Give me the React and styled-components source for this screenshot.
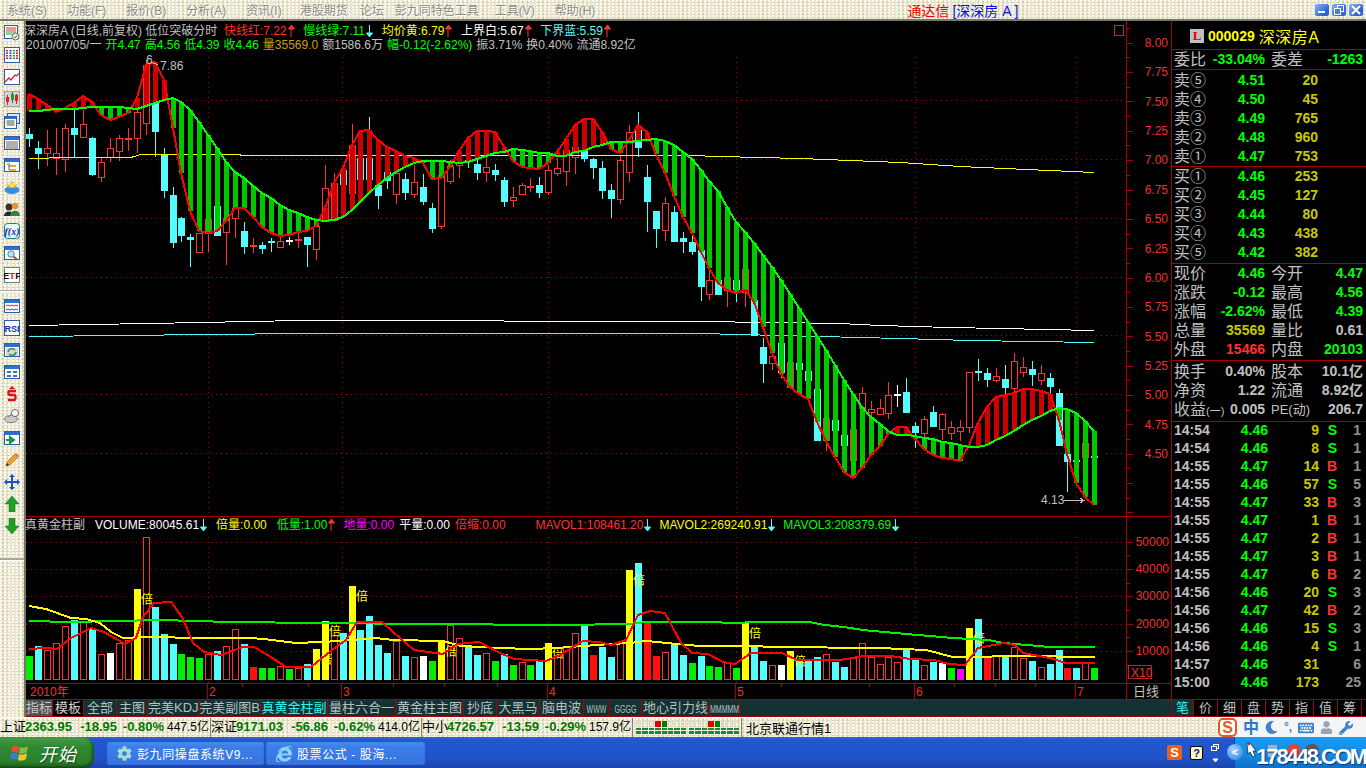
import React from 'react';
import styled, { createGlobalStyle, css } from 'styled-components';
import { FaMoon, FaKeyboard, FaUser, FaWrench, FaInternetExplorer, FaCog } from 'react-icons/fa';

const SANS = `"Liberation Sans", "Noto Sans CJK SC", sans-serif`;

const GlobalStyle = createGlobalStyle`
  html, body { margin: 0; padding: 0; background: #000; }
  body { font-family: ${SANS}; font-size: 12px; }
`;

// speckled beige of the old skinned toolbars
const speckle = css`
  background-color: #e9e5d0;
  background-image:
    radial-gradient(circle at 1px 1px, #fbfaf0 0.8px, transparent 1.1px),
    radial-gradient(circle at 3px 2px, #d6d0a8 0.7px, transparent 1px);
  background-size: 4px 3px, 5px 4px;
`;

const Shell = styled.div`
  width: 1366px;
  height: 768px;
  overflow: hidden;
  display: flex;
  flex-direction: column;
  background: #000;
`;

/* ---------- menu bar ---------- */

const MenuBar = styled.div`
  ${speckle}
  height: 21px;
  box-sizing: border-box;
  border-bottom: 2px solid #77756a;
  display: flex;
  align-items: center;
  padding: 0 3px 0 7px;
  flex: none;
`;

const MenuItem = styled.span`
  margin-right: 20px;
  margin-left: ${p => p.$ml || 0}px;
  color: #8d8d84;
  text-shadow: 1px 1px 0 #fff;
  font-size: 12px;
  white-space: nowrap;
`;

const AppTitle = styled.div`
  margin-left: 292px;
  font-size: 14px;
  color: #f00000;
  white-space: pre;
  span { color: #1010e0; margin-left: 3px; }
`;

const WinButtons = styled.div`
  margin-left: auto;
  display: flex;
  gap: 3px;
`;

const WinButton = styled.div`
  width: 14px;
  height: 12px;
  border-radius: 2px;
  background: linear-gradient(135deg, #8db4f0, #2e66d8 70%);
  display: flex;
  align-items: center;
  justify-content: center;
  svg { display: block; }
`;

/* ---------- left toolbar ---------- */

const Body = styled.div`
  height: 696px;
  display: flex;
  flex: none;
`;

const Toolbar = styled.div`
  ${speckle}
  width: 26px;
  box-sizing: border-box;
  border-right: 2px solid #77756a;
  padding-top: 1px;
  display: flex;
  flex-direction: column;
  flex: none;
`;

const ToolCell = styled.div`
  height: 22px;
  flex: none;
  display: flex;
  align-items: center;
  justify-content: center;
`;

const ToolSep = styled.div`
  height: 9px;
  flex: none;
  display: flex;
  align-items: center;
  &::after { content: ''; flex: 1; height: 1px; background: #a8a698; border-bottom: 1px solid #fff; }
`;

const ToolRule = styled.div`
  height: 2px;
  margin-top: 21px;
  background: #a8a698;
  border-bottom: 1px solid #fff;
  flex: none;
`;

const IconSvg = styled.svg`
  width: 16px;
  height: 16px;
  display: block;
`;

const Win = ({ children }) => (
  <>
    <rect x="0.5" y="1.5" width="15" height="13" fill="#fff" stroke="#2a5fb0" />
    <rect x="1" y="2" width="14" height="3" fill="#2f6fd0" />
    {children}
  </>
);

const icons = [
  <>
    <rect x="0.5" y="0.5" width="13" height="13" fill="#fff" stroke="#2a5fb0" />
    <path d="M2 3h10M2 5h10" stroke="#d03030" /><path d="M2 7h10M2 9h6" stroke="#20a040" />
    <circle cx="11.5" cy="11.5" r="3.5" fill="#e8e8e8" stroke="#666" /><path d="M10 11.5l1.2 1.4 2-2.6" stroke="#208030" fill="none" />
  </>,
  <>
    <rect x="0.5" y="0.5" width="15" height="15" fill="#fff" stroke="#2a5fb0" />
    <path d="M3 3v10" stroke="#d02020" strokeWidth="2" strokeDasharray="1.5 1" /><path d="M6.5 3v10" stroke="#1030d0" strokeWidth="2" strokeDasharray="1.5 1" />
    <path d="M10 3v10" stroke="#20a020" strokeWidth="2" strokeDasharray="1.5 1" /><path d="M13 3v10" stroke="#d02020" strokeWidth="2" strokeDasharray="1.5 1" />
  </>,
  <>
    <rect x="0.5" y="0.5" width="15" height="15" fill="#fff" stroke="#2a5fb0" />
    <path d="M1 13l4-4 2 2 4-5 2 1 2-3" stroke="#e02020" strokeWidth="1.3" fill="none" />
  </>,
  <>
    <rect x="0.5" y="0.5" width="15" height="15" fill="#d4d4d4" stroke="#a0a0a0" />
    <path d="M3.5 4v10" stroke="#d02020" /><rect x="2" y="6" width="3" height="5" fill="#e02020" />
    <path d="M8.5 1v11" stroke="#108030" /><rect x="7" y="3" width="3" height="6" fill="#18a040" />
    <path d="M12.5 3v10" stroke="#d02020" /><rect x="11" y="4" width="3" height="6" fill="#e02020" />
  </>,
  <>
    <rect x="3.5" y="0.5" width="12" height="10" fill="#dce8f8" stroke="#2a5fb0" />
    <rect x="0.5" y="3.5" width="12" height="12" fill="#fff" stroke="#2a5fb0" /><rect x="1" y="4" width="11" height="2" fill="#2f6fd0" />
    <path d="M2.5 8h8M2.5 10h8M2.5 12h8" stroke="#505050" />
  </>,
  <Win><path d="M2 7h12M2 9h12M2 11h12M2 13h12" stroke="#606060" /></Win>,
  <Win>
    <rect x="3" y="6" width="3" height="2" fill="#e0b020" /><rect x="8" y="8" width="4" height="2" fill="#e0b020" /><rect x="8" y="12" width="4" height="2" fill="#e0b020" />
    <path d="M5 8v5h3M5 9h3" stroke="#606060" fill="none" />
  </Win>,
  <>
    <ellipse cx="8" cy="11" rx="7.5" ry="4" fill="#3a8ee0" />
    <path d="M2 5l3 4h6l3-4-3 1-3-4-3 4z" fill="#f0a828" /><ellipse cx="8" cy="6" rx="3" ry="2" fill="#ffd860" />
  </>,
  <>
    <circle cx="5" cy="6" r="3.5" fill="#403020" /><path d="M0 15c0-6 10-6 10 0z" fill="#1c2440" />
    <circle cx="11" cy="5" r="3.2" fill="#e89040" /><path d="M6 15c0-7 10-7 10 0z" fill="#408030" />
  </>,
  <>
    <rect x="0.5" y="0.5" width="15" height="15" rx="3" fill="#eaf6f0" stroke="#108080" />
    <text x="8" y="12" textAnchor="middle" fontSize="10" fontStyle="italic" fontWeight="700" fill="#1030b0" fontFamily="Liberation Serif">f(x)</text>
  </>,
  <Win><circle cx="7" cy="9" r="3.2" fill="#bfe0ff" stroke="#5080a0" /><path d="M9.5 11.5l3.5 3" stroke="#806030" strokeWidth="2" /></Win>,
  <>
    <rect x="0.5" y="0.5" width="15" height="15" fill="#fff" stroke="#6a7c98" />
    <text x="8" y="12" textAnchor="middle" fontSize="9.5" fontWeight="700" fill="#101010" fontFamily="Liberation Sans">E<tspan fill="#e02020">T</tspan>F</text>
  </>,
  <Win><path d="M2 8l2-1 2 1 2-1 2 1 2-1 2 1" stroke="#e02020" fill="none" /><path d="M2 12l2-1 2 1 2-1 2 1 2-1 2 1" stroke="#2040d0" fill="none" /></Win>,
  <>
    <rect x="0.5" y="0.5" width="15" height="15" fill="#fff" stroke="#2a5fb0" />
    <text x="8" y="12" textAnchor="middle" fontSize="9" fontWeight="700" fill="#1030c0" fontFamily="Liberation Sans">RSI</text>
  </>,
  <Win><rect x="2" y="6" width="12" height="8" fill="#d8d8d8" /><path d="M4 10a4 4 0 0 1 7-2M12 10a4 4 0 0 1-7 2" stroke="#30a040" strokeWidth="1.8" fill="none" /></Win>,
  <Win><rect x="3" y="7" width="4" height="2" fill="#4070c0" /><rect x="9" y="7" width="4" height="2" fill="#4070c0" /><rect x="3" y="11" width="4" height="2" fill="#4070c0" /><rect x="9" y="11" width="4" height="2" fill="#4070c0" /></Win>,
  <>
    <path d="M8 0l3 3H5z" fill="#e01010" />
    <path d="M12 5H6C4 5 4 9 6 9h4c2 0 2 5 0 5H4" stroke="#e01010" strokeWidth="2.4" fill="none" />
  </>,
  <>
    <ellipse cx="7" cy="11" rx="6.5" ry="3.6" fill="#c8c8c8" stroke="#808080" />
    <circle cx="11" cy="5" r="3.6" fill="#eef4fa" stroke="#707070" /><path d="M4 9l4-3" stroke="#909090" strokeWidth="1.5" />
  </>,
  <Win><path d="M2 10h6M6 7l4 3-4 3z" stroke="#10a030" strokeWidth="2" fill="#10a030" /></Win>,
  <>
    <path d="M2 14l1-4 8-8 3 3-8 8z" fill="#f0a030" stroke="#a06010" strokeWidth="0.6" />
    <path d="M11 2l3 3 1-1-3-3z" fill="#e06060" /><path d="M2 14l1-3 2 2z" fill="#303030" />
  </>,
  <path d="M8 0l3 3H9v4h4V5l3 3-3 3V9H9v4h2l-3 3-3-3h2V9H3v2L0 8l3-3v2h4V3H5z" fill="#1850c8" />,
  <path d="M8 0l7 8h-4v8H5V8H1z" fill="#20a020" stroke="#107010" strokeWidth="0.5" />,
  <path d="M8 16l7-8h-4V0H5v8H1z" fill="#20a020" stroke="#107010" strokeWidth="0.5" />,
];

/* ---------- chart data, all in screen pixels ---------- */

const candleX = i => Math.round(29.3 + 8.95 * i);

// type, wick top, body top, body bottom, wick bottom
const candles = [
  ['c',128,134,139,147],['c',141,148,154,169],['r',130,148,153,166],['r',128,153,158,175],['r',124,128,159,172],
  ['c',108,128,135,157],['r',110,124,137,138],['c',137,138,175,176],['r',157,162,177,182],['r',138,148,157,162],
  ['r',135,138,151,161],['d',128,138,140,151],['r',98,112,138,153],['r',60,65,123,135],['c',88,103,132,157],
  ['c',148,154,191,198],['c',187,195,243,248],['c',217,218,236,242],['c',234,237,240,267],['r',233,233,252,252],
  ['r',219,219,233,252],['c',206,206,236,236],['r',218,218,232,265],['r',207,208,218,238],['c',222,231,247,254],
  ['d',238,245,247,253],['c',242,245,249,254],['c',238,241,243,252],['r',235,241,247,247],['w',237,240,241,245],
  ['d',233,239,241,248],['c',237,237,245,267],['r',226,226,249,260],['r',165,188,220,220],['r',173,183,220,220],
  ['c',165,170,185,205],['r',124,145,193,210],['c',150,158,180,185],['c',117,158,180,180],['c',185,185,196,209],
  ['c',172,172,181,189],['r',172,173,194,204],['c',173,179,193,200],['r',165,182,194,198],['c',174,187,202,205],
  ['c',203,208,229,233],['r',173,175,226,229],['r',160,166,181,184],['r',152,163,165,178],['c',159,160,162,168],
  ['c',160,164,173,180],['r',157,167,172,182],['c',164,170,175,181],['c',177,180,202,207],['r',187,197,200,207],
  ['r',183,185,194,195],['d',178,186,188,192],['c',177,185,193,198],['r',165,170,192,195],['r',158,168,173,176],
  ['r',150,150,171,186],['r',147,147,157,174],['c',151,151,159,162],['c',158,159,168,179],['c',161,168,191,199],
  ['c',184,190,199,218],['r',156,160,199,204],['r',125,132,172,182],['c',112,130,148,157],['c',165,177,202,232],
  ['c',211,211,229,248],['r',197,203,230,241],['c',206,212,242,242],['c',232,238,242,253],['c',235,242,252,255],
  ['c',250,250,287,301],['r',268,280,294,300],['c',280,280,295,295],['r',277,277,290,307],['c',280,280,290,302],
  ['r',268,269,292,307],['c',280,300,336,336],['c',338,347,364,383],['r',352,356,363,370],['c',343,343,373,378],
  ['r',362,362,387,387],['c',363,363,370,390],['c',371,371,381,398],['c',389,389,441,441],['r',418,418,440,451],
  ['c',420,420,431,457],['c',435,435,446,446],['r',429,429,460,460],['r',387,393,408,413],['r',401,409,412,417],
  ['r',399,408,414,415],['r',382,395,413,419],['w',385,394,395,407],['c',378,392,413,413],['c',422,426,433,448],
  ['r',416,419,433,440],['c',406,412,427,427],['r',413,414,429,440],['r',421,427,433,440],['r',420,427,431,441],
  ['r',372,372,427,433],['c',359,371,373,381],['c',368,373,380,387],['r',368,376,380,382],['c',365,379,388,395],
  ['r',353,361,388,392],['r',357,367,372,377],['c',361,369,375,386],['r',365,373,380,385],['c',373,378,387,397],
  ['c',389,393,446,446],['c',454,454,462,492],['c',459,460,462,463],['r',443,443,457,457],['c',455,456,458,459],
];

const fast = [94,99,105,112,108,103,96,102,115,120,117,113,98,65,62,80,128,173,211,231,233,231,221,208,208,217,227,233,236,235,232,231,226,208,183,168,145,131,130,140,147,151,156,158,163,179,178,167,151,138,131,131,132,147,161,167,168,169,163,152,139,125,119,119,132,149,153,140,125,132,154,173,196,217,233,252,268,283,290,293,290,302,327,353,374,387,394,399,422,441,457,472,478,468,455,446,434,427,427,439,449,455,458,459,461,445,423,407,397,395,393,389,389,391,394,420,454,483,497,505];
const slow = [111,111,110,109,109,109,108,107,107,107,107,108,109,106,103,100,98,102,110,122,135,148,162,172,178,186,193,198,205,210,213,217,220,221,220,217,210,202,193,185,178,172,167,163,161,161,161,162,163,162,159,156,153,152,149,150,151,153,153,156,156,152,151,147,145,142,142,142,141,140,139,141,145,152,159,170,181,191,207,222,232,243,255,267,280,294,308,322,336,350,365,380,394,407,417,424,431,435,435,436,438,439,442,443,445,447,447,445,440,436,431,425,420,416,411,408,409,413,421,431];

// half-pixel heights keep the 1px lines from vanishing under crispEdges
const yellowLine = [[29,158.5],[70,157.5],[130,157.5],[135,156.5],[140,154.5],[340,155.5],[690,155.5],[720,156.5],[800,158.5],[900,162.5],[960,166.5],[1094,172.5]];
const whiteLine = [[29,325.5],[150,323.5],[300,320.5],[700,321.5],[840,323.5],[880,325.5],[950,327.5],[1000,328.5],[1094,330.5]];
const cyanLine = [[29,336.5],[300,333.5],[700,333.5],[820,336.5],[900,338.5],[970,340.5],[1094,342.5]];

const volumes = [
  ['g',656],['c',646],['r',650],['r',643],['r',626],['c',620],['r',622],['c',628],['r',654],['w',653],
  ['r',643],['r',640],['y',589],['r',537],['c',607],['c',634],['c',644],['g',654],['g',657],['g',658],
  ['r',654],['c',651],['r',646],['r',629],['c',644],['R',667],['g',668],['g',668],['r',666],['g',669],
  ['r',668],['c',664],['y',649],['y',621],['r',635],['c',633],['y',586],['c',630],['c',616],['c',645],
  ['c',653],['r',641],['c',656],['r',657],['w',656],['g',661],['y',641],['r',625],['r',638],['c',645],
  ['c',655],['r',653],['g',661],['c',654],['g',665],['r',662],['g',665],['c',661],['y',643],['r',655],
  ['r',646],['r',633],['c',625],['R',655],['c',647],['c',657],['r',642],['y',570],['c',563],['R',623],
  ['R',656],['r',652],['c',643],['c',655],['g',663],['c',656],['g',666],['g',667],['r',662],['g',668],
  ['y',623],['c',645],['c',661],['r',665],['w',665],['y',651],['c',660],['c',660],['c',657],['r',654],
  ['c',662],['c',667],['r',658],['r',643],['r',657],['r',664],['r',657],['r',662],['c',650],['c',660],
  ['r',665],['c',662],['w',663],['g',668],['m',669],['y',628],['c',619],['R',657],['r',656],['c',657],
  ['r',647],['r',658],['c',661],['r',667],['c',664],['c',650],['R',668],['c',668],['r',662],['g',668],
];

const volRed = [[29,649],[46,648],[57,649],[71,638],[91,628],[104,632],[125,644],[136,638],[143,617],[154,603],[171,602],[182,617],[193,643],[204,652],[221,655],[243,647],[254,647],[271,657],[286,667],[311,667],[332,650],[346,640],[357,622],[382,622],[393,632],[414,650],[443,654],[457,644],[479,642],[500,653],[514,659],[546,661],[560,655],[583,641],[599,642],[611,645],[626,640],[638,615],[650,611],[665,613],[681,643],[692,653],[708,654],[723,662],[735,664],[751,653],[782,653],[797,660],[817,660],[840,660],[864,656],[891,656],[910,659],[934,660],[949,664],[965,665],[978,648],[1004,643],[1015,645],[1023,653],[1050,658],[1066,663],[1095,663]];
const volYellow = [[29,606],[46,609],[71,618],[86,619],[100,623],[111,632],[123,638],[143,637],[171,637],[179,638],[250,638],[264,639],[296,643],[321,642],[339,641],[375,638],[393,640],[443,641],[461,646],[500,648],[530,649],[557,648],[583,646],[611,644],[630,643],[646,641],[657,642],[677,644],[700,646],[751,646],[774,647],[879,648],[926,650],[953,657],[969,657],[1015,656],[1095,657]];
const volGreen = [[29,621],[70,622],[160,620],[230,622],[320,623],[425,624],[560,625],[630,624],[646,622],[700,622],[743,623],[747,622],[809,622],[825,625],[844,627],[863,630],[895,633],[918,635],[953,638],[988,640],[1004,643],[1027,645],[1050,647],[1095,647]];

const COLORS = { c: '#54fcfc', r: '#ff3232', d: '#ff3232', R: '#ff1010', w: '#ffffff', g: '#00ee00', y: '#ffff00', m: '#ff00ff' };
const GRID = '#b00000';
const AXIS = '#a80000';
const VGRID_X = [208.5, 342.5, 548.5, 736.5, 915.5, 1076.5];
const toPath = pts => pts.map(([x, y]) => `${x},${y}`).join(' ');

const ChartSvg = styled.svg`
  display: block;
  flex: none;
  shape-rendering: crispEdges;
  text { font-family: ${SANS}; font-size: 12px; shape-rendering: auto; }
`;

const Workspace = styled.div`
  width: 1145px;
  flex: none;
  display: flex;
  flex-direction: column;
`;

const Pane = styled.div`
  position: relative;
  flex: none;
`;

const Legend = styled.div`
  position: absolute;
  left: 0;
  top: ${p => p.$top}px;
  display: flex;
  flex-direction: column;
`;

const LegendRow = styled.div`
  height: 14px;
  line-height: 14px;
  display: flex;
  align-items: center;
  gap: ${p => p.$gap || 8}px;
  white-space: nowrap;
`;

const LegendItem = styled.span`
  display: inline-flex;
  align-items: center;
  gap: 1px;
  color: ${p => p.$c || '#c0c0c0'};
  margin-left: ${p => p.$ml || 0}px;
`;

const Arrow = ({ up, color }) => (
  <svg width="7" height="14" viewBox="0 0 7 14" style={{ display: 'block' }}>
    {up ? <path d="M3 13V5M0.5 5L3.5 1 6.5 5z" stroke={color} fill={color} /> : <path d="M3.5 1V9M0.5 9L3.5 13 6.5 9z" stroke={color} fill={color} />}
  </svg>
);

const RED_UP = <Arrow up color="#ff3232" />;
const CYAN_DOWN = <Arrow color="#54fcfc" />;

const PriceChart = () => {
  const ticks = [];
  for (let k = -1; k <= 32; k++) ticks.push({ y: Math.round(42.7 + 14.68 * k), major: k % 2 === 0 });
  return (
    <ChartSvg width="1145" height="496" viewBox="26 21 1145 496">
      {[100.5, 159.5, 218.5, 277.5, 335.5, 394.5, 453.5].map(y => (
        <line key={y} x1="26" x2="1126" y1={y} y2={y} stroke={GRID} strokeDasharray="1 4" />
      ))}
      {VGRID_X.map(x => <line key={x} x1={x} x2={x} y1="57" y2="517" stroke={GRID} strokeDasharray="1 4" />)}

      {candles.map(([t, hi, top, bot, lo], i) => {
        const x = candleX(i);
        const col = COLORS[t];
        if (t === 'r') {
          return (
            <g key={i}>
              <rect x={x} y={hi} width="1" height={lo - hi} fill={col} />
              <rect x={x - 2.5} y={top + 0.5} width="6" height={bot - top} fill="#000" stroke={col} />
            </g>
          );
        }
        return (
          <g key={i}>
            <rect x={x} y={hi} width="1" height={lo - hi} fill={col} />
            <rect x={x - 3} y={top} width="7" height={Math.max(bot - top, 2)} fill={col} />
          </g>
        );
      })}

      <polyline points={toPath(yellowLine)} fill="none" stroke="#ffff00" />
      <polyline points={toPath(whiteLine)} fill="none" stroke="#ffffff" />
      <polyline points={toPath(cyanLine)} fill="none" stroke="#54fcfc" />

      {fast.map((f, i) => {
        const s = slow[i];
        return (
          <rect key={i} x={candleX(i) - 2} y={Math.min(f, s)} width="5" height={Math.abs(f - s)} fill={f < s ? '#cc0000' : '#00c800'} />
        );
      })}
      <polyline points={fast.map((y, i) => `${candleX(i)},${y}`).join(' ')} fill="none" stroke="#ff0000" strokeWidth="2" />
      <polyline points={slow.map((y, i) => `${candleX(i)},${y}`).join(' ')} fill="none" stroke="#00ff00" strokeWidth="2" />

      <text x="146" y="64" fill="#c0c0c0">6</text>
      <path d="M151 62l7 3" stroke="#c0c0c0" fill="none" />
      <text x="160" y="70" fill="#c0c0c0">7.86</text>
      <text x="1041" y="504" fill="#c0c0c0">4.13</text>
      <path d="M1064 500.5h19M1080 498l4 2.5-4 2.5" stroke="#c0c0c0" fill="none" />

      <rect x="1114.5" y="25.5" width="9" height="10" fill="none" stroke="#d02020" />
      <line x1="1126.5" x2="1126.5" y1="21" y2="517" stroke={AXIS} />
      {ticks.map(({ y, major }) => (
        <line key={y} x1="1127" x2={major ? 1133 : 1130} y1={y + 0.5} y2={y + 0.5} stroke={AXIS} />
      ))}
      {Array.from({ length: 15 }, (_, k) => (
        <text key={k} x="1168" y={47 + 29.36 * k} textAnchor="end" fill="#f03030">{(8 - 0.25 * k).toFixed(2)}</text>
      ))}
      <line x1="26" x2="1171" y1="516.5" y2="516.5" stroke={AXIS} />
    </ChartSvg>
  );
};

const monthMarks = [[207, '2'], [341, '3'], [547, '4'], [735, '5'], [914, '6'], [1075, '7']];
const dayTicks = [242, 308, 393, 444, 497, 781, 869, 954, 995, 1035];

const VolumeChart = () => (
  <ChartSvg width="1145" height="182" viewBox="26 517 1145 182">
    {[542.5, 569.5, 596.5, 624.5, 651.5].map(y => (
      <line key={y} x1="26" x2="1126" y1={y} y2={y} stroke={GRID} strokeDasharray="1 4" />
    ))}
    {VGRID_X.map(x => <line key={x} x1={x} x2={x} y1="537" y2="683" stroke={GRID} strokeDasharray="1 4" />)}

    {volumes.map(([t, top], i) => {
      const x = candleX(i);
      if (t === 'r') {
        return <rect key={i} x={x - 2.5} y={top + 0.5} width="6" height={679 - top} fill="#000" stroke={COLORS.r} />;
      }
      return <rect key={i} x={x - 3} y={top} width="7" height={680 - top} fill={COLORS[t]} />;
    })}
    {volumes.map(([t, top], i) => t === 'y' && (
      <text key={i} x={candleX(i) + 4} y={top + 15} fill="#ffff00">倍</text>
    ))}

    <polyline points={toPath(volGreen)} fill="none" stroke="#00ee00" strokeWidth="2" />
    <polyline points={toPath(volYellow)} fill="none" stroke="#ffff00" strokeWidth="2" />
    <polyline points={toPath(volRed)} fill="none" stroke="#ff0000" strokeWidth="2" />

    <line x1="1126.5" x2="1126.5" y1="517" y2="699" stroke={AXIS} />
    {[542, 569, 596, 624, 651].map(y => <line key={y} x1="1127" x2="1133" y1={y + 0.5} y2={y + 0.5} stroke={AXIS} />)}
    {[555, 583, 610, 637, 665].map(y => <line key={y} x1="1127" x2="1130" y1={y + 0.5} y2={y + 0.5} stroke={AXIS} />)}
    {[50000, 40000, 30000, 20000, 10000].map((v, k) => (
      <text key={v} x="1169" y={[546, 573, 600, 628, 655][k]} textAnchor="end" fill="#f03030">{v}</text>
    ))}
    <rect x="1128.5" y="665.5" width="23" height="13" fill="none" stroke="#c02020" />
    <text x="1131" y="677" fill="#f03030">X10</text>

    <line x1="26" x2="1171" y1="683.5" y2="683.5" stroke={AXIS} />
    <text x="30" y="696" fill="#f03030">2010年</text>
    {monthMarks.map(([x, m]) => (
      <g key={m}>
        <line x1={x + 0.5} x2={x + 0.5} y1="684" y2="699" stroke={AXIS} />
        <text x={x + 2} y="696" fill="#f03030">{m}</text>
      </g>
    ))}
    {dayTicks.map(x => <line key={x} x1={x + 0.5} x2={x + 0.5} y1="684" y2="687" stroke={AXIS} />)}
    <text x="1133" y="696" fill="#c0c0c0" style={{ fontSize: 13 }}>日线</text>
  </ChartSvg>
);

/* ---------- tab bar under the charts ---------- */

const tabs = [
  ['指标', 27, 'on'], ['模板', 31, 'dark'], ['全部', 33], ['主图', 31], ['完美KDJ', 51], ['完美副图B', 62],
  ['真黄金柱副', 67, 'cyan'], ['量柱六合一', 68], ['黄金柱主图', 68], ['抄底', 33], ['大黑马', 43], ['脑电波', 44],
  ['WWW', 26, 'small'], ['GGGG', 32, 'small'], ['地心引力线', 68], ['MMMMM', 30, 'small'],
];

const TabBar = styled.div`
  height: 18px;
  flex: none;
  display: flex;
  background: #143232;
  box-sizing: border-box;
  border-top: 1px solid ${AXIS};
  border-bottom: 1px solid ${AXIS};
`;

const Tab = styled.div`
  width: ${p => p.$w}px;
  flex: none;
  box-sizing: border-box;
  border-right: 1px solid ${AXIS};
  text-align: center;
  line-height: 16px;
  white-space: nowrap;
  overflow: hidden;
  font-size: 13px;
  color: #b4c0c0;
  ${p => p.$kind === 'on' && 'background: #505050; color: #c8c8c8;'}
  ${p => p.$kind === 'dark' && 'background: #000; color: #d0d0d0;'}
  ${p => p.$kind === 'cyan' && 'color: #30f0f0;'}
`;

// the tiny latin tab names are tall and squeezed in the original
const SqueezedLabel = styled.span`
  display: inline-block;
  font-size: 7px;
  transform: scaleY(1.6);
`;

/* ---------- right quote panel ---------- */

const QuotePanel = styled.div`
  width: 195px;
  flex: none;
  box-sizing: border-box;
  border-left: 1px solid ${AXIS};
  display: flex;
  flex-direction: column;
  background: #000;
  color: #c0c0c0;
`;

const StockHeader = styled.div`
  height: 29px;
  flex: none;
  box-sizing: border-box;
  border-bottom: 1px solid ${AXIS};
  display: flex;
  align-items: center;
  padding: 2px 0 0 18px;
  color: #ffff00;
`;

const MarketBadge = styled.span`
  width: 14px;
  height: 14px;
  background: #c0c0c0;
  color: #e00000;
  font: bold 13px/14px "Liberation Serif", serif;
  text-align: center;
  margin-right: 4px;
`;

const StockCode = styled.span`
  font-weight: 700;
  font-size: 14px;
  margin-right: 4px;
`;

const StockName = styled.span`
  font-size: 16px;
  letter-spacing: 0.5px;
`;

const QuoteSection = styled.div`
  flex: none;
  box-sizing: border-box;
  border-bottom: 1px solid ${AXIS};
  padding: ${p => p.$pt || 0}px 3px ${p => p.$pb || 0}px 2px;
`;

const QuoteRow = styled.div`
  height: 19px;
  line-height: 19px;
  display: grid;
  grid-template-columns: 31px 60px 6px 31px 61px;
  grid-template-rows: 19px;
  white-space: nowrap;
`;

const Label = styled.span`
  font-size: 16px;
  line-height: 19px;
  color: #c0c0c0;
  grid-column: ${p => p.$col || 'auto'};
  small { font-size: 11px; }
`;

const Num = styled.span`
  font-weight: 700;
  font-size: 14px;
  line-height: 19px;
  text-align: right;
  color: ${p => p.$c || '#c0c0c0'};
  grid-column: ${p => p.$col || 'auto'};
  padding-right: ${p => p.$pr || 0}px;
`;

const PeLabel = styled(Label)`
  font-size: 13px;
`;

const TickList = styled.div`
  flex: 1;
  padding: 0 0 0 2px;
`;

const TickRow = styled.div`
  height: 18px;
  line-height: 17px;
  display: grid;
  grid-template-columns: 36px 58px 51px 18px 24px;
  font-weight: 700;
  font-size: 14px;
`;

const TickCell = styled.span`
  text-align: ${p => (p.$left ? 'left' : 'right')};
  color: ${p => p.$c};
`;

const SideTabs = styled.div`
  height: 18px;
  flex: none;
  display: grid;
  grid-template-columns: 22px repeat(7, 24px);
  border-top: 1px solid ${AXIS};
  border-bottom: 1px solid ${AXIS};
  box-sizing: border-box;
`;

const SideTab = styled.div`
  border-right: 1px solid ${AXIS};
  text-align: center;
  line-height: 16px;
  font-size: 13px;
  color: ${p => (p.$on ? '#30f0f0' : '#c0c0c0')};
  background: ${p => (p.$on ? '#143232' : '#000')};
`;

const GREEN = '#00ff00';
const VOL = '#c8c800';
const RED = '#ff3232';

const sells = [['卖⑤', '4.51', '20'], ['卖④', '4.50', '45'], ['卖③', '4.49', '765'], ['卖②', '4.48', '960'], ['卖①', '4.47', '753']];
const buys = [['买①', '4.46', '253'], ['买②', '4.45', '127'], ['买③', '4.44', '80'], ['买④', '4.43', '438'], ['买⑤', '4.42', '382']];

const stats = [
  ['现价', '4.46', GREEN, '今开', '4.47', GREEN],
  ['涨跌', '-0.12', GREEN, '最高', '4.56', GREEN],
  ['涨幅', '-2.62%', GREEN, '最低', '4.39', GREEN],
  ['总量', '35569', VOL, '量比', '0.61', '#c0c0c0'],
  ['外盘', '15466', RED, '内盘', '20103', GREEN],
];

const ticks = [
  ['14:54', '4.46', '9', 'S', '1'], ['14:54', '4.46', '8', 'S', '1'], ['14:55', '4.47', '14', 'B', '1'],
  ['14:55', '4.46', '57', 'S', '5'], ['14:55', '4.47', '33', 'B', '3'], ['14:55', '4.47', '1', 'B', '1'],
  ['14:55', '4.47', '2', 'B', '1'], ['14:55', '4.47', '3', 'B', '1'], ['14:55', '4.47', '6', 'B', '2'],
  ['14:56', '4.46', '20', 'S', '3'], ['14:56', '4.47', '42', 'B', '2'], ['14:56', '4.46', '15', 'S', '3'],
  ['14:56', '4.46', '4', 'S', '1'], ['14:57', '4.46', '31', '', '6'], ['15:00', '4.46', '173', '', '25'],
];

/* ---------- status bar ---------- */

const StatusBar = styled.div`
  ${speckle}
  height: 20px;
  flex: none;
  box-sizing: border-box;
  border-top: 1px solid #fff;
  display: flex;
  align-items: center;
  position: relative;
`;

const IndexGroup = styled.div`
  width: 211px;
  height: 19px;
  line-height: 18px;
  flex: none;
  box-sizing: border-box;
  border-right: 1px solid #807e70;
  display: grid;
  grid-template-columns: 25px 46px 46px 47px 45px;
  grid-template-rows: 19px;
  white-space: nowrap;
`;

const IndexName = styled.span`
  font-size: 13px;
  color: #000;
`;

const IndexNum = styled.span`
  font-weight: 700;
  font-size: 13px;
  color: #007800;
  text-align: ${p => (p.$left ? 'left' : 'right')};
`;

const IndexAmt = styled.span`
  font-size: 12px;
  color: #000;
  text-align: right;
`;

const BreadthBar = styled.div`
  width: 109px;
  height: 19px;
  flex: none;
  box-sizing: border-box;
  border-right: 1px solid #807e70;
  padding: 3px 0 0 3px;
  display: flex;
  gap: 3px;
`;

const Breadth = styled.div`
  width: 50px;
  display: grid;
  grid-template-columns: repeat(8, 1fr);
  grid-template-rows: 6px 2px 3px;
  gap: 1px 1px;
`;

const BreadthCell = styled.i`
  display: block;
  background: ${p => p.$c || 'transparent'};
  ${p => !p.$c && 'border: 1px solid #d8d6c4; box-sizing: border-box;'}
`;

const FeedName = styled.div`
  padding-left: 4px;
  font-size: 13px;
  color: #000;
  white-space: nowrap;
`;

const ImeBar = styled.div`
  margin-left: auto;
  width: 148px;
  height: 19px;
  flex: none;
  background: #f4f5f6;
  display: flex;
  align-items: center;
  gap: 6px;
  color: #3f82c8;
`;

const ImeLogo = styled.span`
  width: 19px;
  height: 19px;
  box-sizing: border-box;
  border-radius: 5px;
  border: 2px solid #e85a1c;
  color: #e85a1c;
  background: #fff;
  font: bold 16px/15px "Liberation Sans", sans-serif;
  text-align: center;
`;

const ImeText = styled.span`
  font-size: ${p => p.$size || 16}px;
  font-weight: 700;
  line-height: 19px;
  color: ${p => p.$c || '#2f78c4'};
`;

/* ---------- taskbar ---------- */

const Taskbar = styled.div`
  height: 31px;
  flex: none;
  display: flex;
  align-items: stretch;
  background: linear-gradient(#3168d8 0, #2457d0 8%, #2052c8 70%, #1a44ac 100%);
`;

const StartButton = styled.div`
  width: 94px;
  flex: none;
  box-sizing: border-box;
  border-radius: 0 10px 10px 0;
  background: linear-gradient(#4a9a4a, #308a30 30%, #2a802a 80%, #1d5d1d);
  box-shadow: inset -2px -1px 3px rgba(0, 0, 0, 0.4);
  display: flex;
  align-items: center;
  padding-left: 10px;
  gap: 9px;
  color: #fff;
  font-size: 18px;
  font-style: italic;
  letter-spacing: 1px;
  text-shadow: 1px 1px 1px #1a4a1a;
`;

const TaskButton = styled.div`
  width: ${p => p.$w}px;
  margin: 5px 2px 3px 0;
  flex: none;
  box-sizing: border-box;
  border-radius: 2px;
  background: linear-gradient(#4a8ef2, #3c7ee8 20%, #3774e0);
  box-shadow: inset 0 0 1px #1a44ac;
  display: flex;
  align-items: center;
  padding-left: 10px;
  gap: 5px;
  color: #fff;
  font-size: 12px;
  letter-spacing: 0.6px;
  white-space: nowrap;
`;

const TaskSpacer = styled.div`
  width: 13px;
  flex: none;
`;

const TrayIcons = styled.div`
  margin-left: auto;
  display: flex;
  align-items: center;
  gap: 8px;
  padding-right: 0;
  color: #fff;
`;

const TrayS = styled.span`
  width: 15px;
  height: 15px;
  border-radius: 2px;
  background: #e8601c;
  color: #fff;
  font: bold 13px/15px "Liberation Sans", sans-serif;
  text-align: center;
`;

const TrayHelp = styled.span`
  width: 13px;
  height: 14px;
  border-radius: 2px;
  background: #fff8c0;
  border: 1px solid #000;
  box-sizing: border-box;
  color: #101080;
  font: bold 11px/12px "Liberation Sans", sans-serif;
  text-align: center;
`;

const NotifyArea = styled.div`
  position: relative;
  width: 131px;
  flex: none;
  margin-left: 14px;
  background: linear-gradient(#1c9cf0, #1288e0 60%, #0f70c8);
  border-left: 1px solid #0a4aa0;
`;

const TrayChevron = styled.span`
  position: absolute;
  left: -8px;
  top: 7px;
  width: 16px;
  height: 16px;
  border-radius: 50%;
  background: radial-gradient(circle at 40% 35%, #a8d8ff, #1c78e0);
  color: #fff;
  font: bold 11px/16px "Liberation Sans", sans-serif;
  text-align: center;
`;

const TraySvg = styled.svg`
  position: absolute;
  left: 9px;
  top: 5px;
`;

const Watermark = styled.div`
  position: absolute;
  right: 0;
  bottom: -1px;
  font: bold 22px/24px "Liberation Sans", sans-serif;
  letter-spacing: -2.1px;
  color: #fff;
  text-shadow: 1px 1px 1px #083070;
  white-space: nowrap;
`;

const indexes = [
  ['上证', '2363.95', '-18.95', '-0.80%', '447.5亿'],
  ['深证', '9171.03', '-56.86', '-0.62%', '414.0亿'],
  ['中小', '4726.57', '-13.59', '-0.29%', '157.9亿'],
];

const breadthCells = Array.from({ length: 24 }, (_, k) => {
  if (k === 3) return '#e00000';
  if (k === 4) return '#008000';
  return k < 8 ? null : '#1a8a30';
});

const App = () => (
  <Shell>
    <GlobalStyle />
    <MenuBar>
      <MenuItem>系统(S)</MenuItem>
      <MenuItem>功能(F)</MenuItem>
      <MenuItem>报价(B)</MenuItem>
      <MenuItem>分析(A)</MenuItem>
      <MenuItem>资讯(I)</MenuItem>
      <MenuItem $ml={-2}>港股期货</MenuItem>
      <MenuItem $ml={-8}>论坛</MenuItem>
      <MenuItem $ml={-9}>彭九同特色工具</MenuItem>
      <MenuItem $ml={-4}>工具(V)</MenuItem>
      <MenuItem>帮助(H)</MenuItem>
      <AppTitle>通达信<span>[深深房 A ]</span></AppTitle>
      <WinButtons>
        <WinButton><svg width="8" height="8"><rect x="0" y="5" width="7" height="2" fill="#fff" /></svg></WinButton>
        <WinButton><svg width="10" height="10" fill="none" stroke="#fff"><rect x="3.5" y="0.5" width="6" height="6" /><rect x="0.5" y="3.5" width="6" height="6" fill="#4a7fe0" /></svg></WinButton>
        <WinButton><svg width="10" height="10" stroke="#fff" strokeWidth="2"><path d="M1 1l8 8M9 1l-8 8" /></svg></WinButton>
      </WinButtons>
    </MenuBar>

    <Body>
      <Toolbar>
        {icons.slice(0, 12).map((icon, i) => <ToolCell key={i}><IconSvg viewBox="0 0 16 16">{icon}</IconSvg></ToolCell>)}
        <ToolSep />
        {icons.slice(12).map((icon, i) => <ToolCell key={i}><IconSvg viewBox="0 0 16 16">{icon}</IconSvg></ToolCell>)}
        <ToolRule />
      </Toolbar>

      <Workspace>
        <Pane>
          <PriceChart />
          <Legend $top={3}>
            <LegendRow $gap={8.6}>
              <LegendItem $ml={-2}>深深房A (日线,前复权) 低位突破分时</LegendItem>
              <LegendItem $c="#ff3232" $ml={-2}>快线红:7.22{RED_UP}</LegendItem>
              <LegendItem $c="#00ff00">慢线绿:7.11{CYAN_DOWN}</LegendItem>
              <LegendItem $c="#ffff00">均价黄:6.79{RED_UP}</LegendItem>
              <LegendItem $c="#ffffff">上界白:5.67{RED_UP}</LegendItem>
              <LegendItem $c="#54fcfc">下界蓝:5.59{RED_UP}</LegendItem>
            </LegendRow>
            <LegendRow $gap={4}>
              <LegendItem>2010/07/05/一</LegendItem>
              <LegendItem $c="#00ff00">开4.47</LegendItem>
              <LegendItem $c="#00ff00">高4.56</LegendItem>
              <LegendItem $c="#00ff00">低4.39</LegendItem>
              <LegendItem $c="#00ff00">收4.46</LegendItem>
              <LegendItem $c="#c8a000">量35569.0</LegendItem>
              <LegendItem>额1586.6万</LegendItem>
              <LegendItem $c="#00ff00">幅-0.12(-2.62%)</LegendItem>
              <LegendItem>振3.71%</LegendItem>
              <LegendItem>换0.40%</LegendItem>
              <LegendItem>流通8.92亿</LegendItem>
            </LegendRow>
          </Legend>
        </Pane>

        <Pane>
          <VolumeChart />
          <Legend $top={1}>
            <LegendRow>
              <LegendItem $ml={-1}>真黄金柱副</LegendItem>
              <LegendItem $c="#ffffff" $ml={2}>VOLUME:80045.61{CYAN_DOWN}</LegendItem>
              <LegendItem $c="#ffff00" $ml={1}>倍量:0.00</LegendItem>
              <LegendItem $c="#00ff00" $ml={2}>低量:1.00{RED_UP}</LegendItem>
              <LegendItem $c="#ff00ff">地量:0.00</LegendItem>
              <LegendItem $c="#ffffff" $ml={-3}>平量:0.00</LegendItem>
              <LegendItem $c="#ff3232" $ml={-3}>倍缩:0.00</LegendItem>
              <LegendItem $c="#ff3232" $ml={22}>MAVOL1:108461.20{CYAN_DOWN}</LegendItem>
              <LegendItem $c="#ffff00">MAVOL2:269240.91{CYAN_DOWN}</LegendItem>
              <LegendItem $c="#00ff00">MAVOL3:208379.69{CYAN_DOWN}</LegendItem>
            </LegendRow>
          </Legend>
        </Pane>

        <TabBar>
          {tabs.map(([name, w, kind]) => (
            <Tab key={name} $w={w} $kind={kind}>
              {kind === 'small' ? <SqueezedLabel>{name}</SqueezedLabel> : name}
            </Tab>
          ))}
        </TabBar>
      </Workspace>

      <QuotePanel>
        <StockHeader>
          <MarketBadge>L</MarketBadge>
          <StockCode>000029</StockCode>
          <StockName>深深房A</StockName>
        </StockHeader>
        <QuoteSection>
          <QuoteRow>
            <Label>委比</Label>
            <Num $c={GREEN}>-33.04%</Num>
            <Label $col="4">委差</Label>
            <Num $c={GREEN}>-1263</Num>
          </QuoteRow>
        </QuoteSection>
        <QuoteSection $pt={1}>
          {sells.map(([l, p, v]) => (
            <QuoteRow key={l}><Label>{l}</Label><Num $c={GREEN}>{p}</Num><Num $c={VOL} $col="4 / 6" $pr={45}>{v}</Num></QuoteRow>
          ))}
        </QuoteSection>
        <QuoteSection $pb={1}>
          {buys.map(([l, p, v]) => (
            <QuoteRow key={l}><Label>{l}</Label><Num $c={GREEN}>{p}</Num><Num $c={VOL} $col="4 / 6" $pr={45}>{v}</Num></QuoteRow>
          ))}
        </QuoteSection>
        <QuoteSection $pb={1}>
          {stats.map(([a, av, ac, b, bv, bc]) => (
            <QuoteRow key={a}>
              <Label>{a}</Label><Num $c={ac}>{av}</Num>
              <Label $col="4">{b}</Label><Num $c={bc}>{bv}</Num>
            </QuoteRow>
          ))}
        </QuoteSection>
        <QuoteSection $pt={1} $pb={2}>
          <QuoteRow><Label>换手</Label><Num>0.40%</Num><Label $col="4">股本</Label><Num>10.1亿</Num></QuoteRow>
          <QuoteRow><Label>净资</Label><Num>1.22</Num><Label $col="4">流通</Label><Num>8.92亿</Num></QuoteRow>
          <QuoteRow>
            <Label>收益<small>(一)</small></Label><Num>0.005</Num>
            <PeLabel $col="4">PE(动)</PeLabel><Num>206.7</Num>
          </QuoteRow>
        </QuoteSection>
        <TickList>
          {ticks.map(([t, p, v, side, n], i) => (
            <TickRow key={i}>
              <TickCell $left $c="#c0c0c0">{t}</TickCell>
              <TickCell $c={GREEN}>{p}</TickCell>
              <TickCell $c={VOL}>{v}</TickCell>
              <TickCell $c={side === 'S' ? GREEN : RED}>{side}</TickCell>
              <TickCell $c="#909090">{n}</TickCell>
            </TickRow>
          ))}
        </TickList>
        <SideTabs>
          {['笔', '价', '细', '盘', '势', '指', '值', '筹'].map((t, i) => <SideTab key={t} $on={i === 0}>{t}</SideTab>)}
        </SideTabs>
      </QuotePanel>
    </Body>

    <StatusBar>
      {indexes.map(([n, v, c, pct, amt]) => (
        <IndexGroup key={n}>
          <IndexName>{n}</IndexName>
          <IndexNum $left>{v}</IndexNum>
          <IndexNum>{c}</IndexNum>
          <IndexNum>{pct}</IndexNum>
          <IndexAmt>{amt}</IndexAmt>
        </IndexGroup>
      ))}
      <BreadthBar>
        {[0, 1].map(g => (
          <Breadth key={g}>
            {breadthCells.map((c, k) => <BreadthCell key={k} $c={c} />)}
          </Breadth>
        ))}
      </BreadthBar>
      <FeedName>北京联通行情1</FeedName>
      <ImeBar>
        <ImeLogo>S</ImeLogo>
        <ImeText>中</ImeText>
        <FaMoon size={13} />
        <ImeText $c="#3f82c8" $size={12}>°,</ImeText>
        <FaKeyboard size={16} />
        <FaUser size={13} color="#9aa4ac" />
        <FaWrench size={14} />
      </ImeBar>
    </StatusBar>

    <Taskbar>
      <StartButton>
        <svg width="20" height="18" viewBox="0 0 20 18">
          <path d="M2 3c3-2 5-1 7 0l-1 6c-2-1-4-2-7 0z" fill="#e8502c" />
          <path d="M10 3c2 1 5 1 8-1l-1 6c-3 2-6 2-8 1z" fill="#7cc040" />
          <path d="M1 10c3-2 5-1 7 0l-1 6c-2-1-4-2-7 0z" fill="#3a7ce0" />
          <path d="M9 10c2 1 5 1 8-1l-1 6c-3 2-6 2-8 1z" fill="#f4c430" />
        </svg>
        开始
      </StartButton>
      <TaskSpacer />
      <TaskButton $w={157}><FaCog size={15} color="#9fe0d0" />彭九同操盘系统V9...</TaskButton>
      <TaskButton $w={159}><FaInternetExplorer size={16} color="#8fd0ff" />股票公式 - 股海...</TaskButton>
      <TrayIcons>
        <TrayS>S</TrayS>
        <TrayHelp>?</TrayHelp>
        <svg width="9" height="20" viewBox="0 0 9 20" fill="none" stroke="#fff">
          <rect x="2.5" y="1.5" width="5" height="4" /><rect x="0.5" y="3.5" width="5" height="4" fill="#2052c8" />
          <path d="M2 16h5l-2.500 3z" fill="#fff" />
        </svg>
      </TrayIcons>
      <NotifyArea>
        <TrayChevron>&lt;</TrayChevron>
        <TraySvg width="90" height="20" viewBox="0 0 90 20">
          <path d="M3 1l3 0 6 8-3 0 2 5-2 1-3-5-2 2z" fill="#fff" stroke="#000" strokeWidth="0.6" />
          <path d="M3 1h4l-2 3z" fill="#e02020" />
          <rect x="24" y="3" width="9" height="12" fill="#9ab4c8" />
          <circle cx="50" cy="9" r="7" fill="#d84838" />
          <circle cx="68" cy="9" r="7" fill="#585858" />
        </TraySvg>
        <Watermark>178448.COM</Watermark>
      </NotifyArea>
    </Taskbar>
  </Shell>
);

export default App;
